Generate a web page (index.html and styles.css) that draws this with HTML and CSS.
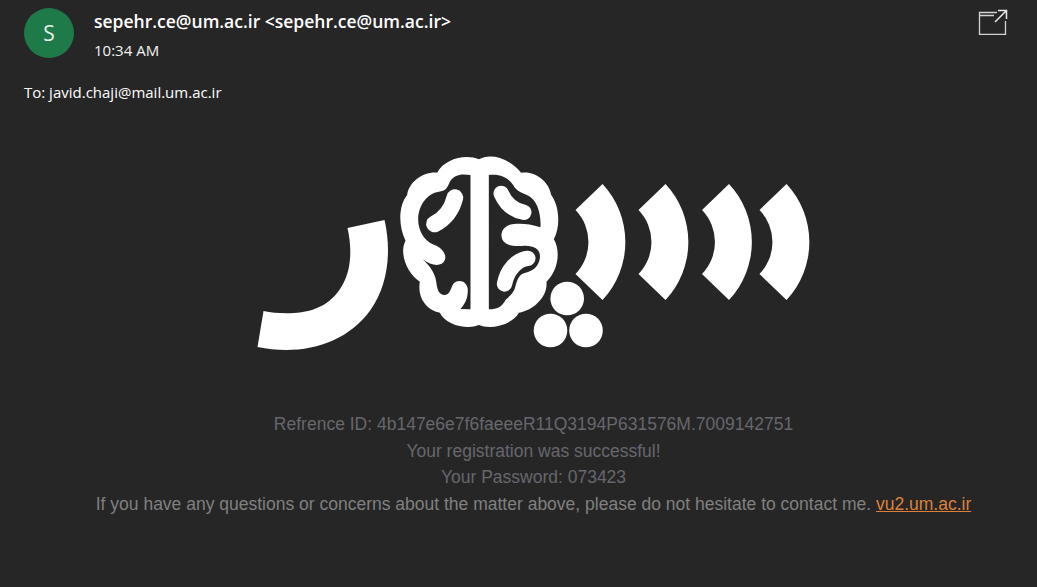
FILE: index.html
```html
<!DOCTYPE html>
<html lang="en">
<head>
<meta charset="utf-8">
<title>Registration message</title>
<link rel="stylesheet" href="styles.css">
</head>
<body>
<header class="head">
  <div class="avatar">S</div>
  <div class="meta">
    <div class="sender">sepehr.ce@um.ac.ir &lt;sepehr.ce@um.ac.ir&gt;</div>
    <div class="time">10:34 AM</div>
  </div>
  <svg class="popout" viewBox="0 0 30 26" width="30" height="26" aria-hidden="true">
    <path d="M19 3.500H1.500V25.500H27.500V12M1.500 6.500H16" fill="none" stroke="#d4d4d4" stroke-width="1.300"/>
    <path d="M17 13L28.500 1.500M20 1.500H28.500V10" fill="none" stroke="#e8e8e8" stroke-width="1.500"/>
  </svg>
</header>
<div class="to">To: javid.chaji@mail.um.ac.ir</div>
<main class="message">
  <svg class="logo" viewBox="248.500 150 570 210" width="570" height="210" role="img" aria-label="logo">
    <g fill="#fff">
      <path d="M384 220L347 228C352 250 350 270 343 283C333 303 315 312 293 313C283 313.500 272 313 263 311L257 347C300 356 345 345 370 310C388 285 391 250 384 220Z"/>
      <path d="M602 184L575 210A46 46 0 0 1 575 274L602 300A85 85 0 0 0 602 184Z"/>
      <path d="M665 184L638 210A46 46 0 0 1 638 274L665 300A85 85 0 0 0 665 184Z"/>
      <path d="M728.500 184L701.500 210A46 46 0 0 1 701.500 274L728.500 300A85 85 0 0 0 728.500 184Z"/>
      <path d="M786 184L759 210A46 46 0 0 1 759 274L786 300A85 85 0 0 0 786 184Z"/>
      <circle cx="566.700" cy="298.500" r="16.800"/>
      <circle cx="550" cy="330.500" r="16.800"/>
      <circle cx="585.500" cy="330.500" r="16.800"/>
    </g>
    <g transform="translate(390 150) scale(.33333)">
      <path fill="#fff" d="M265 28C295 10 350 18 392 68C435 62 476 95 482 135C505 165 512 225 490 268C510 300 505 360 468 395C472 440 430 480 385 488C365 525 300 540 265 525C230 540 165 525 148 488C105 480 80 440 88 395C50 370 25 310 45 272C22 225 25 165 50 135C55 98 95 65 140 68C160 28 225 10 265 28Z"/>
      <path fill="#262626" d="M240 75C210 70 190 75 178 95C170 115 165 122 145 125C110 130 85 165 83 205C82 240 100 270 125 282C150 290 170 310 163 330C155 350 125 350 97 328C115 345 130 365 135 385C140 405 138 432 160 435C180 437 180 412 190 400C205 385 232 395 232 420C232 450 220 465 210 477L240 478Z"/>
      <path fill="#262626" d="M295 75C330 70 355 85 368 105C378 125 395 128 415 138C440 152 452 190 450 232C420 222 395 220 370 222C345 225 332 240 333 258C335 280 355 290 395 288C430 285 452 298 448 325C445 350 425 365 405 368C385 372 380 390 375 408C370 432 355 438 345 450C335 470 320 478 295 478Z"/>
      <g fill="none" stroke="#fff" stroke-linecap="round">
        <path d="M193 143C185 175 165 205 132 222" stroke-width="50"/>
        <path d="M332 130C345 160 365 180 400 187" stroke-width="46"/>
        <path d="M412 325C380 328 350 360 342 402" stroke-width="46"/>
      </g>
    </g>
  </svg>
  <p class="line dim">Refrence ID: 4b147e6e7f6faeeeR11Q3194P631576M.7009142751</p>
  <p class="line dim">Your registration was successful!</p>
  <p class="line dim">Your Password: 073423</p>
  <p class="line soft">If you have any questions or concerns about the matter above, please do not hesitate to contact me. <a class="link" href="#">vu2.um.ac.ir</a></p>
</main>
</body>
</html>
```
FILE: styles.css
```css
* { box-sizing: border-box; }
html, body { margin: 0; height: 100%; }
body {
  background: #262626;
  color: #fff;
  font-family: "Open Sans", "Noto Sans", sans-serif;
  overflow: hidden;
}
.head {
  display: flex;
  align-items: flex-start;
  padding: 8px 29px 0 24px;
}
.avatar {
  width: 50px;
  height: 50px;
  border-radius: 50%;
  background: #1f7a4a;
  display: flex;
  align-items: center;
  justify-content: center;
  font-size: 21px;
  color: #e6f0ea;
}
.meta { margin-left: 20px; flex: 1; }
.sender {
  font-size: 17.500px;
  font-weight: 600;
  line-height: 28px;
  margin-top: -1px;
}
.time {
  font-size: 15px;
  line-height: 20px;
  margin-top: 5px;
  color: #f2f2f2;
}
.popout { flex: none; margin-top: 1px; }
.to {
  font-size: 15px;
  line-height: 20px;
  margin: 22px 0 0 24px;
}
.message {
  text-align: center;
  padding-left: 30px;
  margin-top: 48px;
}
.logo { display: block; margin: 0 auto; }
.line {
  margin: 0;
  font-family: "Liberation Sans", Arial, sans-serif;
  font-size: 17.500px;
  line-height: 26.600px;
}
.message .line:first-of-type { margin-top: 51px; }
.dim { color: #67676d; }
.soft { color: #808080; }
.link { color: #dd803c; }
```
